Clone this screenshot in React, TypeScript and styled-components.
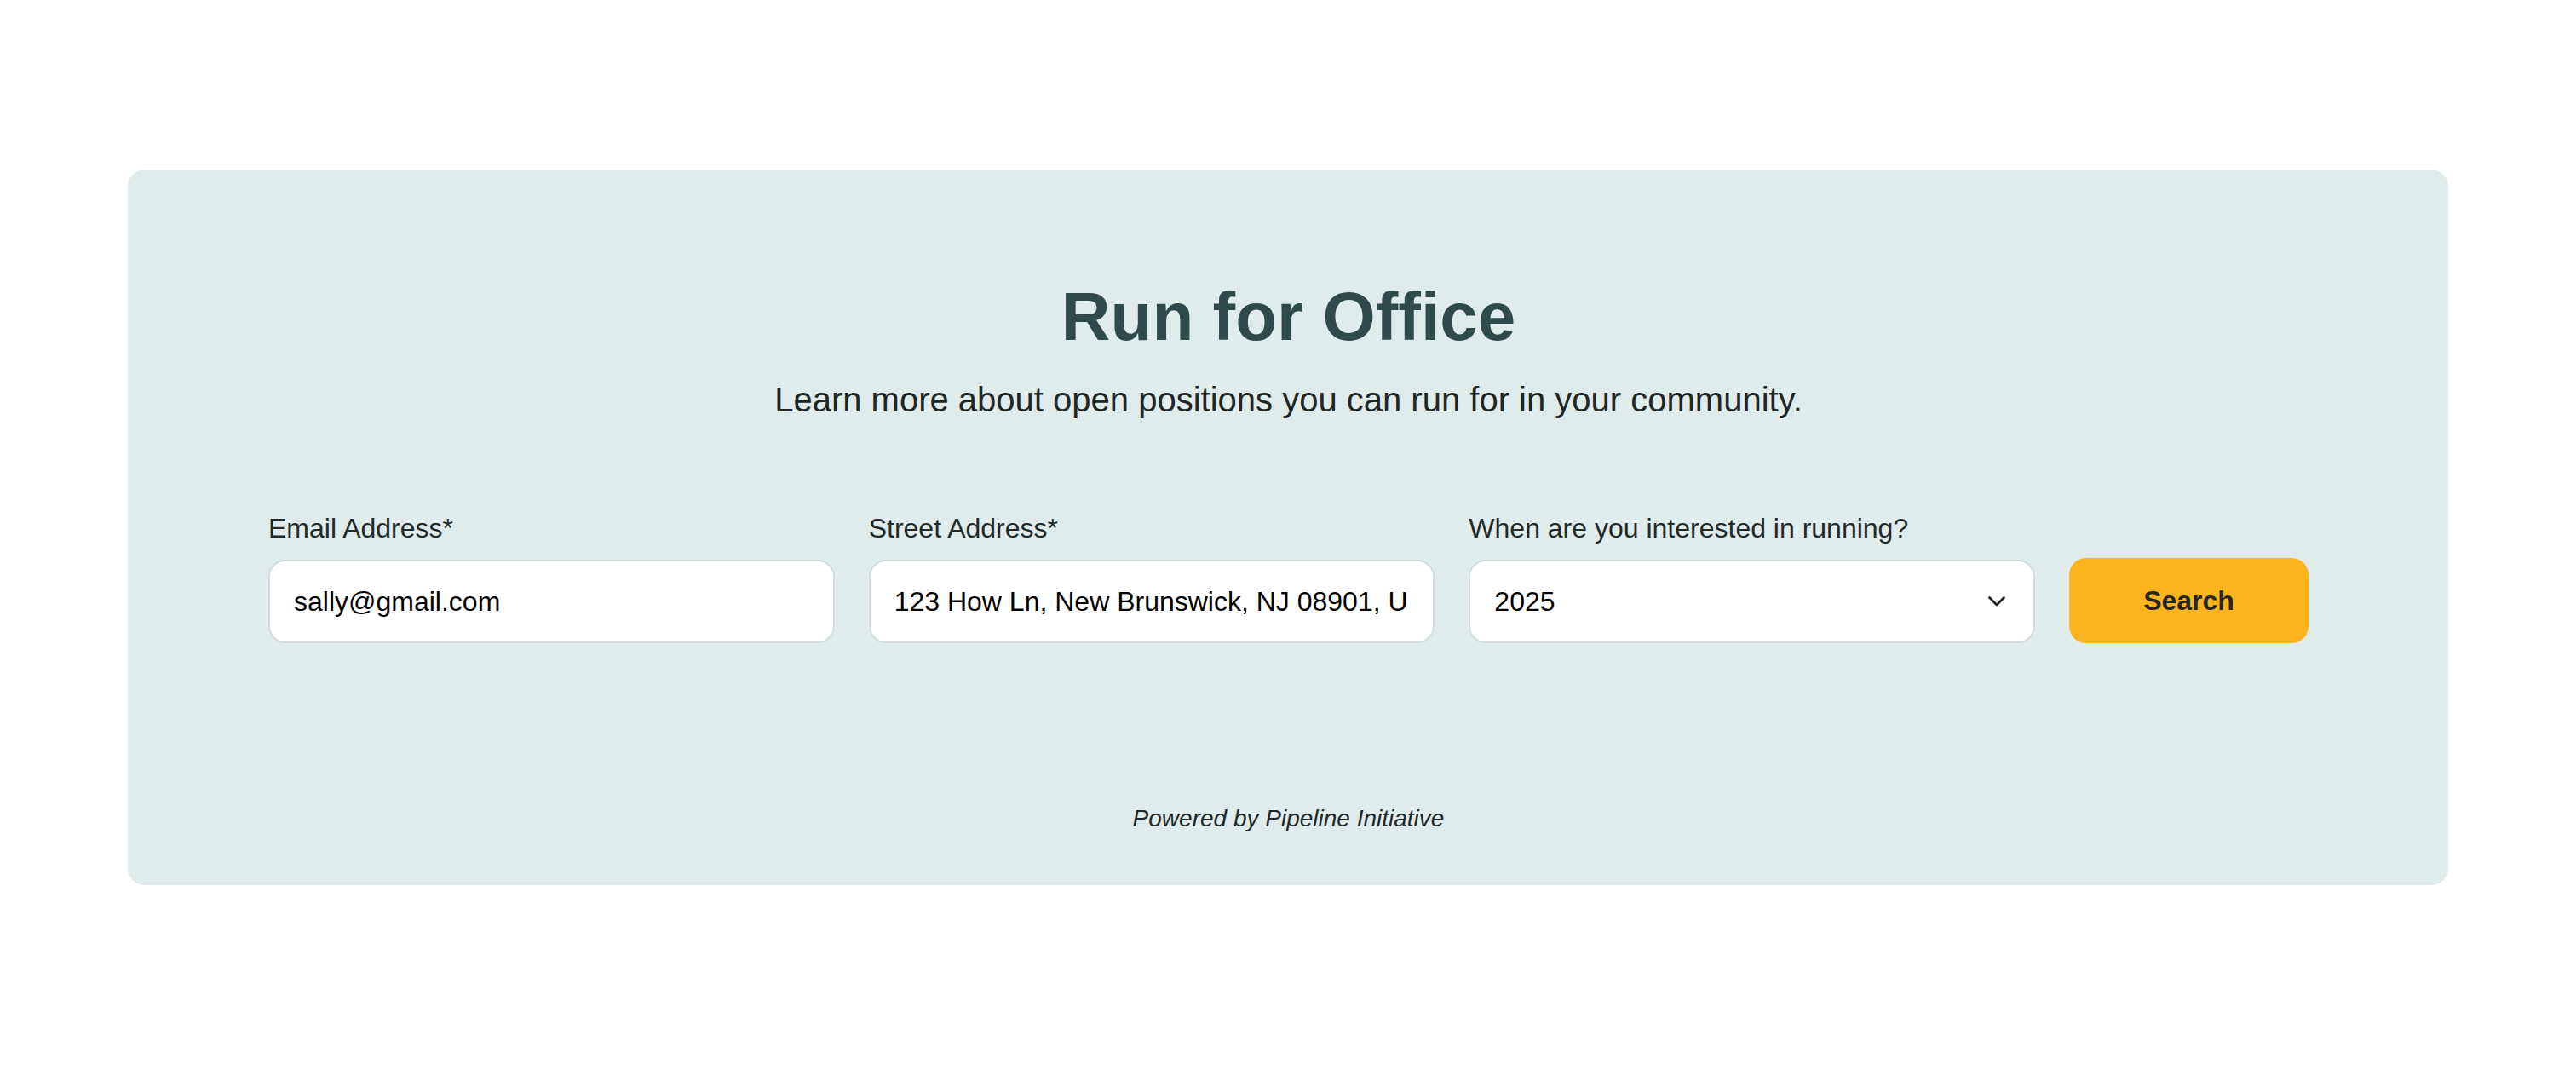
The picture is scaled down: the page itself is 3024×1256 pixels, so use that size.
import React from "react";
import styled, { createGlobalStyle } from "styled-components";

const GlobalStyle = createGlobalStyle`
  html, body {
    margin: 0;
    padding: 0;
    background: #ffffff;
    font-family: "Liberation Sans", Arial, Helvetica, sans-serif;
  }
  * { box-sizing: border-box; }
`;

const Page = styled.div`
  padding: 199px 150px 0 150px;
`;

const Card = styled.section`
  background: #e0ecec;
  border-radius: 20px;
  padding: 125px 164px 61px 165px;
  display: flex;
  flex-direction: column;
  align-items: center;
`;

const Title = styled.h1`
  margin: 0;
  font-size: 80px;
  line-height: 96px;
  font-weight: 700;
  color: #2f4a4a;
  text-align: center;
`;

const Subtitle = styled.p`
  margin: 25px 0 0 0;
  font-size: 40px;
  line-height: 48px;
  color: #1f2626;
  text-align: center;
`;

const Form = styled.form`
  margin-top: 108px;
  width: 100%;
  display: grid;
  grid-template-columns: 1fr 1fr 1fr 281px;
  column-gap: 40px;
  align-items: end;
`;

const Field = styled.label`
  display: flex;
  flex-direction: column;
  gap: 18px;
  min-width: 0;
`;

const LabelText = styled.span`
  font-size: 32px;
  line-height: 38px;
  color: #232929;
`;

const TextInput = styled.input`
  width: 100%;
  height: 98px;
  padding: 0 30px 0 28px;
  border: 2px solid #d3dcdc;
  border-radius: 20px;
  background: #ffffff;
  font-family: "Liberation Sans", Arial, Helvetica, sans-serif;
  font-size: 32px;
  color: #000000;
  outline: none;
`;

const SelectWrap = styled.div`
  position: relative;
  width: 100%;
`;

const Select = styled.select`
  width: 100%;
  height: 98px;
  padding: 0 70px 0 28px;
  border: 2px solid #d3dcdc;
  border-radius: 20px;
  background: #ffffff;
  font-family: "Liberation Sans", Arial, Helvetica, sans-serif;
  font-size: 32px;
  color: #000000;
  appearance: none;
  -webkit-appearance: none;
  outline: none;
`;

const Chevron = styled.svg`
  position: absolute;
  right: 34px;
  top: 50%;
  transform: translateY(-50%);
  pointer-events: none;
`;

const SearchButton = styled.button`
  height: 100px;
  border: none;
  border-radius: 20px;
  background: #fdb51f;
  font-family: "Liberation Sans", Arial, Helvetica, sans-serif;
  font-size: 32px;
  font-weight: 700;
  color: #262626;
  cursor: pointer;
`;

const Footer = styled.p`
  margin: 189px 0 0 0;
  font-size: 28px;
  line-height: 34px;
  font-style: italic;
  color: #222828;
  text-align: center;
`;

export default function App() {
  return (
    <>
      <GlobalStyle />
      <Page>
        <Card>
          <Title>Run for Office</Title>
          <Subtitle>
            Learn more about open positions you can run for in your community.
          </Subtitle>
          <Form onSubmit={(e) => e.preventDefault()}>
            <Field>
              <LabelText>Email Address*</LabelText>
              <TextInput type="email" defaultValue="sally@gmail.com" />
            </Field>
            <Field>
              <LabelText>Street Address*</LabelText>
              <TextInput
                type="text"
                defaultValue="123 How Ln, New Brunswick, NJ 08901, USA"
              />
            </Field>
            <Field>
              <LabelText>When are you interested in running?</LabelText>
              <SelectWrap>
                <Select defaultValue="2025">
                  <option value="2025">2025</option>
                  <option value="2026">2026</option>
                  <option value="2027">2027</option>
                </Select>
                <Chevron width="22" height="14" viewBox="0 0 22 14" fill="none">
                  <path
                    d="M2.5 2.5 L11 11 L19.5 2.5"
                    stroke="#222"
                    strokeWidth="2.8"
                    strokeLinecap="round"
                    strokeLinejoin="round"
                  />
                </Chevron>
              </SelectWrap>
            </Field>
            <SearchButton type="submit">Search</SearchButton>
          </Form>
          <Footer>Powered by Pipeline Initiative</Footer>
        </Card>
      </Page>
    </>
  );
}
